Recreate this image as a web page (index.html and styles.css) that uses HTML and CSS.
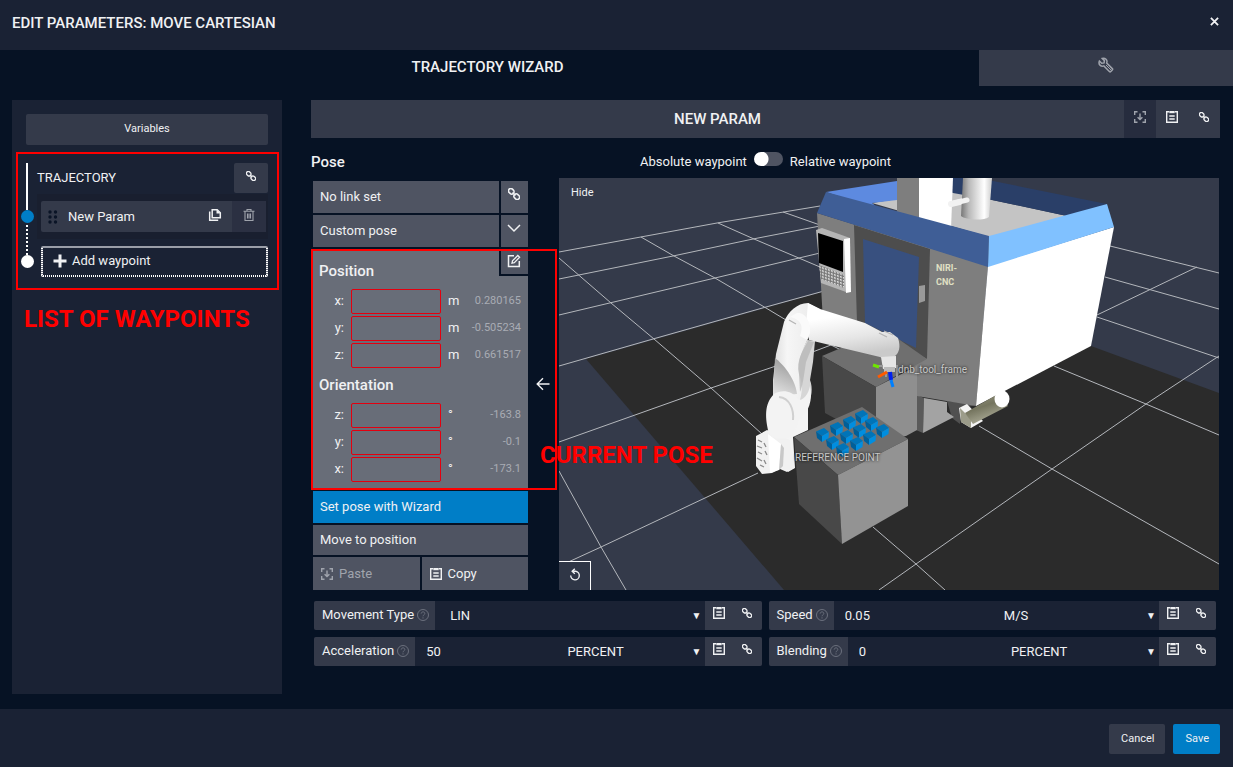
FILE: index.html
```html
<!DOCTYPE html>
<html lang="en">
<head>
    <meta charset="utf-8">
    <title>Edit parameters: Move Cartesian</title>
    <link rel="stylesheet" href="styles.css">
</head>
<body>

<!-- icon set -->
<svg class="sprite" aria-hidden="true">
    <symbol id="i-link" viewBox="0 0 14 14">
        <g transform="rotate(45 7 7)" fill="none" stroke="currentColor" stroke-width="1.8">
            <rect x="-1" y="4.300" width="7" height="5.400" rx="2.700"/>
            <rect x="8" y="4.300" width="7" height="5.400" rx="2.700"/>
            <path d="M4.6 7h4.8"/>
        </g>
    </symbol>
    <symbol id="i-copy" viewBox="0 0 14 14">
        <path d="M4 1.7H1.7v10.6h10.6V1.7H10" fill="none" stroke="currentColor" stroke-width="1.4"/>
        <path d="M4.3 1h5.4v2.2H4.3z" fill="currentColor"/>
        <path d="M4.3 6h5.4M4.3 9h5.4" stroke="currentColor" stroke-width="1.4"/>
    </symbol>
    <symbol id="i-paste" viewBox="0 0 14 14">
        <path d="M4.5 1.7H1.7v3.2M9.5 1.7h2.8v3.2M4.5 12.3H1.7V9.1M9.5 12.3h2.8V9.1M7 3.5v6M4.6 7.2L7 9.6l2.4-2.4" fill="none" stroke="currentColor" stroke-width="1.4"/>
    </symbol>
    <symbol id="i-wrench" viewBox="0 0 16 16">
        <path d="M4.2 1.4l2.2 2.2-.3 2.3-2.4.4L1.4 4C.7 5.8 1.1 7.4 2.2 8.3c1.1.9 2.4 1 3.6.6l5.6 5.6c.4.4 1 .4 1.4 0l1.5-1.5c.4-.4.4-1 0-1.4L8.7 6c.5-1.3.3-2.7-.7-3.7-1-1-2.4-1.4-3.8-.9z" fill="none" stroke="currentColor" stroke-width="1.5"/>
        <path d="M8 8l5 5" stroke="currentColor"/>
    </symbol>
    <symbol id="i-pages" viewBox="0 0 14 14">
        <path d="M4.2 1.7h5l3.1 3.1v5H4.2z" fill="none" stroke="currentColor" stroke-width="1.5"/>
        <path d="M8.5 1.5v4h4z" fill="currentColor"/>
        <path d="M1.7 3.5v8.800h8.5" fill="none" stroke="currentColor" stroke-width="1.5"/>
    </symbol>
    <symbol id="i-trash" viewBox="0 0 14 14">
        <path d="M1.5 3.2h11M5 3V1.5h4V3M3 3.5v9h8v-9M5.5 5.5v5M7 5.5v5M8.5 5.5v5" fill="none" stroke="currentColor" stroke-width="1.1"/>
    </symbol>
    <symbol id="i-plus" viewBox="0 0 14 14">
        <path d="M7 0.5v13M0.500 7h13" stroke="currentColor" stroke-width="3"/>
    </symbol>
    <symbol id="i-drag" viewBox="0 0 10 14">
        <g fill="currentColor">
            <circle cx="2" cy="2" r="1.7"/><circle cx="7.5" cy="2" r="1.7"/>
            <circle cx="2" cy="7" r="1.7"/><circle cx="7.5" cy="7" r="1.7"/>
            <circle cx="2" cy="12" r="1.7"/><circle cx="7.5" cy="12" r="1.7"/>
        </g>
    </symbol>
    <symbol id="i-chevron" viewBox="0 0 14 14">
        <path d="M1 4l6 6 6-6" fill="none" stroke="currentColor" stroke-width="1.5"/>
    </symbol>
    <symbol id="i-edit" viewBox="0 0 14 14">
        <path d="M7 1.7H1.5v10.8h10.8V7" fill="none" stroke="currentColor" stroke-width="1.5"/>
        <path d="M5 9.2l.5-2.4 5.3-5.3 1.8 1.8-5.3 5.3z" fill="none" stroke="currentColor" stroke-width="1.3"/>
    </symbol>
    <symbol id="i-arrow" viewBox="0 0 14 14">
        <path d="M13.5 7H1.5M7 1.2L1.2 7 7 12.8" fill="none" stroke="currentColor" stroke-width="1.4"/>
    </symbol>
    <symbol id="i-reset" viewBox="0 0 14 14">
        <path d="M5.5 3.3h2.2a4.3 4.3 0 1 1-5 4.3M6.8.8L4.2 3.3l2.6 2.5" fill="none" stroke="currentColor" stroke-width="1.4"/>
    </symbol>
    <symbol id="i-help" viewBox="0 0 14 14">
        <circle cx="7" cy="7" r="5.5" fill="none" stroke="currentColor"/>
        <path d="M5.2 5.6c0-2.3 3.6-2.3 3.6-.1C8.800 6.800 7 6.800 7 8.300M7 9.300v1.200" fill="none" stroke="currentColor"/>
    </symbol>
</svg>

<div class="dialog">
    <header class="dialog-header">
        <h1>EDIT PARAMETERS: MOVE CARTESIAN</h1>
        <button class="close" aria-label="Close"><svg viewBox="0 0 10 10"><path d="M1 1l8 8M9 1L1 9" stroke="currentColor" stroke-width="2"/></svg></button>
    </header>

    <nav class="tabs">
        <button class="tab tab-active">TRAJECTORY WIZARD</button>
        <button class="tab tab-tools" aria-label="Settings"><svg class="icon icon-16"><use href="#i-wrench"/></svg></button>
    </nav>

    <div class="content">
        <aside class="sidebar">
            <button class="variables">Variables</button>

            <section class="trajectory">
                <div class="rail">
                    <span class="rail-line"></span>
                    <span class="rail-dot rail-dot-active"></span>
                    <span class="rail-line rail-line-dotted"></span>
                    <span class="rail-dot"></span>
                </div>
                <div class="waypoints">
                    <div class="trajectory-head">
                        <h2>TRAJECTORY</h2>
                        <button class="trajectory-link" aria-label="Link trajectory"><svg class="icon icon-10"><use href="#i-link"/></svg></button>
                    </div>
                    <div class="waypoint-slot">
                        <div class="waypoint">
                            <svg class="drag"><use href="#i-drag"/></svg>
                            <span class="waypoint-name">New Param</span>
                            <button class="waypoint-btn" aria-label="Duplicate"><svg class="icon icon-14"><use href="#i-pages"/></svg></button>
                            <button class="waypoint-btn waypoint-delete" aria-label="Delete"><svg class="icon icon-14"><use href="#i-trash"/></svg></button>
                        </div>
                    </div>
                    <button class="add-waypoint"><svg class="icon icon-14"><use href="#i-plus"/></svg>Add waypoint</button>
                </div>
                <div class="callout callout-list"></div>
                <strong class="callout-text callout-text-list">LIST OF WAYPOINTS</strong>
            </section>
        </aside>

        <main class="editor">
            <div class="param-title">
                <h2>NEW PARAM</h2>
                <button class="title-btn title-btn-off" aria-label="Paste parameter"><svg class="icon icon-14"><use href="#i-paste"/></svg></button>
                <button class="title-btn" aria-label="Copy parameter"><svg class="icon icon-14"><use href="#i-copy"/></svg></button>
                <button class="title-btn" aria-label="Link parameter"><svg class="icon icon-10"><use href="#i-link"/></svg></button>
            </div>

            <div class="pose-head">
                <h3>Pose</h3>
                <label class="waypoint-mode">
                    <span>Absolute waypoint</span>
                    <input type="checkbox" class="switch">
                    <span>Relative waypoint</span>
                </label>
            </div>

            <div class="workspace">
                <div class="pose">
                    <div class="pose-row">
                        <button class="pose-item">No link set</button>
                        <button class="pose-side" aria-label="Link pose"><svg class="icon icon-12"><use href="#i-link"/></svg></button>
                    </div>
                    <div class="pose-row">
                        <button class="pose-item">Custom pose</button>
                        <button class="pose-side" aria-label="Choose pose"><svg class="icon icon-14"><use href="#i-chevron"/></svg></button>
                    </div>

                    <div class="pose-panel">
                        <button class="pose-edit" aria-label="Edit pose"><svg class="icon icon-14"><use href="#i-edit"/></svg></button>
                        <h4>Position</h4>
                        <div class="coord"><label for="pos-x">x:</label><input id="pos-x" type="text"><span class="unit">m</span><output>0.280165</output></div>
                        <div class="coord"><label for="pos-y">y:</label><input id="pos-y" type="text"><span class="unit">m</span><output>-0.505234</output></div>
                        <div class="coord"><label for="pos-z">z:</label><input id="pos-z" type="text"><span class="unit">m</span><output>0.661517</output></div>
                        <h4>Orientation</h4>
                        <div class="coord"><label for="rot-z">z:</label><input id="rot-z" type="text"><span class="unit">°</span><output>-163.8</output></div>
                        <div class="coord"><label for="rot-y">y:</label><input id="rot-y" type="text"><span class="unit">°</span><output>-0.1</output></div>
                        <div class="coord"><label for="rot-x">x:</label><input id="rot-x" type="text"><span class="unit">°</span><output>-173.1</output></div>
                    </div>

                    <button class="pose-item pose-wizard">Set pose with Wizard</button>
                    <button class="pose-item pose-move">Move to position</button>
                    <div class="pose-row">
                        <button class="pose-item pose-clip pose-paste" disabled><svg class="icon icon-14"><use href="#i-paste"/></svg>Paste</button>
                        <button class="pose-item pose-clip"><svg class="icon icon-14"><use href="#i-copy"/></svg>Copy</button>
                    </div>
                </div>

                <button class="take-pose" aria-label="Use current pose"><svg class="icon icon-14"><use href="#i-arrow"/></svg></button>

                <div class="scene">
                    <svg class="scene-view" viewBox="559 178 660 412">
                        <defs>
                            <linearGradient id="tube"><stop offset="0" stop-color="#777"/><stop offset=".25" stop-color="#b8b8b8"/><stop offset=".75" stop-color="#fff"/><stop offset="1" stop-color="#ccc"/></linearGradient>
                            <linearGradient id="arm"><stop offset="0" stop-color="#dcdcdc"/><stop offset=".3" stop-color="#f6f6f6"/><stop offset=".8" stop-color="#ececec"/><stop offset="1" stop-color="#cfcfcf"/></linearGradient>
                            <linearGradient id="forearm" x2=".25" y2="1"><stop offset=".3" stop-color="#fff"/><stop offset=".7" stop-color="#e6e6e6"/><stop offset="1" stop-color="#cacaca"/></linearGradient>
                            <linearGradient id="crease" x1=".3" x2="0" y2="1"><stop offset="0" stop-color="#9c9c9c"/><stop offset="1" stop-color="#e8e8e8"/></linearGradient>
                            <linearGradient id="chute" x2=".5" y2="1"><stop offset="0" stop-color="#9b9b86"/><stop offset=".5" stop-color="#75755f"/><stop offset="1" stop-color="#b0b09c"/></linearGradient>
                            <pattern id="keys" width="3" height="3" patternUnits="userSpaceOnUse" patternTransform="skewY(18)"><rect width="3" height="3" fill="#777"/><rect width="2" height="1.5" fill="#e4e4e4"/></pattern>
                            <symbol id="cube" viewBox="0 0 13 14">
                                <path d="M0 3.5L8 0l5 4-7 4z" fill="#0074b8"/>
                                <path d="M0 3.5L6 8v6L1 10z" fill="#005f99"/>
                                <path d="M6 8l7-4-.5 6L6 14z" fill="#008ee0"/>
                            </symbol>
                        </defs>

                        <rect x="559" y="178" width="660" height="412" fill="#343a4a"/>
                        <path d="M586 359L822 292 1091 346 1219 393V590H784z" fill="#2b2b2b"/>

                        <g class="grid">
                            <path d="M559 252L717 223 820 206M559 279L673 256 753 239 820 226M559 315L715 278 820 253M559 366L653 339 766 307 824 291"/>
                            <path d="M559 442L711 388 773 367 831 345 841 350M564 564L601 547 758 473"/>
                            <path d="M559 258L611 303 654 339 711 388 762 434M641 237L674 256 715 278 766 308 786 320M718 223L754 239 820 267M783 212L820 225M559 471L601 547 626 590"/>
                            <path d="M879 590L916 564 1052 469 1146 404 1219 356M1097 315L1197 267M1110 246L1219 273M1105 277L1219 309M1097 317L1219 358"/>
                            <path d="M1054 366L1146 404 1219 435M979 426L1052 469 1219 564M873 527L916 564 945 590"/>
                        </g>

                        <!-- machine -->
                        <path d="M947 401L978 405 960 408V424L952 418z" fill="#505050"/>
                        <path d="M917 395L924 398 923 433 916 430z" fill="#5a5a5a"/>
                        <path d="M924 398L947 402V412L954 417 923 433z" fill="#a3a3a3"/>
                        <path d="M817 213L988 266 976 406 917 396V370L823 322z" fill="#7e7e7e"/>
                        <path d="M854 225L930 249 927 359 857 322z" fill="#4d4d4d"/>
                        <path d="M863 239L919 257 916 348 865 323z" fill="#38507f"/>
                        <path d="M919 286L925 285V301L919 303z" fill="#9a9a9a"/>
                        <path d="M988 266L1114 227 1091 346 976 406z" fill="#fff"/>
                        <path d="M872 203L897 199 953 192 992 200 1067 216 989 237z" fill="#c4c4c4"/>
                        <path d="M926 178H978L1107 204 1067 216 992 200 953 193z" fill="#2a3f68"/>
                        <path d="M826 192L897 181V200L872 203 880 210z" fill="#5d8ae0"/>
                        <path d="M897 178H919V220L897 214z" fill="#7e7e7e"/>
                        <path d="M919 178H953L951 229 919 220z" fill="#fff"/>
                        <path d="M951 204L968 200" stroke="#f2f2f2" stroke-width="6" stroke-linecap="round"/>
                        <path d="M963 178H992L989 217C984 221 965 220 961 216z" fill="url(#tube)"/>
                        <path d="M951 204L967 200" stroke="#f2f2f2" stroke-width="5" stroke-linecap="round"/>
                        <path d="M826 192L989 236 988 267 817 213z" fill="#3f5e96"/>
                        <path d="M989 236L1107 204 1114 227 988 267z" fill="#80c1ff"/>
                        <path d="M816 230L822 228 850 238 846 292 821 283z" fill="#b5b5b5"/>
                        <path d="M844 239L850 238 851 292 846 293z" fill="#fff"/>
                        <path d="M818 233L843 241V272L819 263z"/>
                        <path d="M819 265L844 275V288L821 279z" fill="url(#keys)"/>
                        <text class="machine-name" x="936" y="271">NIRI-</text>
                        <text class="machine-name" x="936" y="285">CNC</text>

                        <!-- stand in front of the machine door -->
                        <path d="M822 356L848 345 897 338 927 359 876 387z" fill="#6f6f6f"/>
                        <path d="M822 356L876 387V441L825 413z" fill="#484848"/>
                        <path d="M876 387L917 366V430L906 436 876 441z" fill="#8f8f8f"/>

                        <path d="M959 408L967 404 983 421 971 428 961 422z" fill="#f4f4f4"/>
                        <path d="M960 408L971 419V428L961 422z" fill="#9c9c8a"/>
                        <path d="M965 413L998 394 1008 406 973 424z" fill="url(#chute)"/>
                        <ellipse cx="1002" cy="399" rx="7.5" ry="8.5" fill="#fff"/>

                        <!-- table -->
                        <path d="M794 437L862 407 908 439 838 475z" fill="#6f6f6f"/>
                        <path d="M794 437L838 475 842 544 799 504z" fill="#484848"/>
                        <path d="M838 475L908 439V506L842 544z" fill="#939393"/>
                        <g>
                            <use href="#cube" x="855" y="410" width="13" height="14"/>
                            <use href="#cube" x="843" y="416" width="13" height="14"/>
                            <use href="#cube" x="830" y="422" width="13" height="14"/>
                            <use href="#cube" x="816" y="428" width="13" height="14"/>
                            <use href="#cube" x="865" y="417" width="13" height="14"/>
                            <use href="#cube" x="853" y="424" width="13" height="14"/>
                            <use href="#cube" x="840" y="430" width="13" height="14"/>
                            <use href="#cube" x="826" y="436" width="13" height="14"/>
                            <use href="#cube" x="876" y="424" width="13" height="14"/>
                            <use href="#cube" x="863" y="431" width="13" height="14"/>
                            <use href="#cube" x="850" y="437" width="13" height="14"/>
                            <use href="#cube" x="836" y="443" width="13" height="14"/>
                        </g>

                        <!-- robot -->
                        <path d="M797 400L808 395V430L793 437 795 468 788 472 782 440z" fill="#f4f4f4"/>
                        <path d="M756 436L767 430 790 440 794 468 787 472 780 469 772 473 762 474 756 466z" fill="#f1f1f1"/>
                        <path d="M768 434L781 444 779 470 770 473z" fill="#fff"/>
                        <path d="M781 444L784 448 783 466 779 470z" fill="#c8c8c8"/>
                        <path d="M758 440l4 2M757 446l5 2M758 452l4 2M757 458l5 3M760 465l4 2M764 443l2 4M765 451l2 4M764 460l2 4" stroke="#8a8a8a" stroke-width="1.3"/>
                        <path d="M807 340L815 341 813 362 810 380C813 388 812 398 807 406L798 414 790 396 797 360z" fill="#d6d6d6"/>
                        <path d="M808 303C797 303 788 312 784 322L776 354 773 380V398L796 410C802 398 804 386 799 374C796 360 805 346 810 334L820 309z" fill="url(#arm)"/>
                        <path d="M775 358C783 364 795 378 797 394L773 396z" fill="url(#crease)"/>
                        <path d="M799 374C796 360 803 350 808 341L814 342 806 362C804 375 803 385 800 392z" fill="#b4b4b4" opacity=".7"/>
                        <path d="M774 394C782 389 792 391 797 398C801 403 808 396 810 386C813 400 809 412 799 420L792 437C782 440 773 439 769 434C765 418 764 404 774 394z" fill="#f3f3f3"/>
                        <path d="M779 397C790 398 794 410 793 420" fill="none" stroke="#d0d0d0" stroke-width="2"/>
                        <path d="M808 303L820 309 865 323 882 332 890 332 898 338C901 347 899 353 895 356C890 360 884 359 880 357L809 340 806 325z" fill="url(#forearm)"/>
                        <path d="M797 313C806 312 811 323 810 333L807 340 800 336C803 328 803 320 790 317z" fill="#fafafa"/>
                        <path d="M789 320l7 4M879 333l8 4M884 331l9 4" stroke="#b5b5b5" stroke-width="1.3"/>
                        <path d="M881 357L896 356V368L883 369z" fill="#e6e6e6"/>
                        <path d="M884 367H895V372H884z" fill="#bbb"/>
                        <path d="M878 366h5M886 372v5M897 365v13" stroke="#999" stroke-width="2"/>
                        <path d="M873 365l6 2" stroke="#6ee600" stroke-width="3"/>
                        <path d="M878 377l9-5" stroke="#ff5a00" stroke-width="3"/>
                        <path d="M890 372l1 8" stroke="#0020f0" stroke-width="4"/>
                        <path d="M891 380l2 7" stroke="#0080ff" stroke-width="3"/>

                        <text class="tag" x="898" y="373">dnb_tool_frame</text>
                        <text class="tag" x="795" y="461">REFERENCE POINT</text>
                    </svg>
                    <button class="scene-hide">Hide</button>
                    <button class="scene-reset" aria-label="Reset view"><svg class="icon icon-14"><use href="#i-reset"/></svg></button>
                </div>

                <div class="callout callout-pose"></div>
                <strong class="callout-text callout-text-pose">CURRENT POSE</strong>
            </div>

            <div class="settings">
                <div class="setting">
                    <label for="move-type">Movement Type<svg class="icon icon-14 help"><use href="#i-help"/></svg></label>
                    <div class="pick pick-wide"><select id="move-type"><option>LIN</option></select><span>▼</span></div>
                    <button class="setting-btn" aria-label="Copy movement type"><svg class="icon icon-14"><use href="#i-copy"/></svg></button>
                    <button class="setting-btn" aria-label="Link movement type"><svg class="icon icon-10"><use href="#i-link"/></svg></button>
                </div>
                <div class="setting">
                    <label for="speed">Speed<svg class="icon icon-14 help"><use href="#i-help"/></svg></label>
                    <input id="speed" type="text" value="0.05">
                    <div class="pick"><select aria-label="Speed unit"><option>M/S</option></select><span>▼</span></div>
                    <button class="setting-btn" aria-label="Copy speed"><svg class="icon icon-14"><use href="#i-copy"/></svg></button>
                    <button class="setting-btn" aria-label="Link speed"><svg class="icon icon-10"><use href="#i-link"/></svg></button>
                </div>
                <div class="setting">
                    <label for="acceleration">Acceleration<svg class="icon icon-14 help"><use href="#i-help"/></svg></label>
                    <input id="acceleration" type="text" value="50">
                    <div class="pick"><select aria-label="Acceleration unit"><option>PERCENT</option></select><span>▼</span></div>
                    <button class="setting-btn" aria-label="Copy acceleration"><svg class="icon icon-14"><use href="#i-copy"/></svg></button>
                    <button class="setting-btn" aria-label="Link acceleration"><svg class="icon icon-10"><use href="#i-link"/></svg></button>
                </div>
                <div class="setting">
                    <label for="blending">Blending<svg class="icon icon-14 help"><use href="#i-help"/></svg></label>
                    <input id="blending" type="text" value="0">
                    <div class="pick"><select aria-label="Blending unit"><option>PERCENT</option></select><span>▼</span></div>
                    <button class="setting-btn" aria-label="Copy blending"><svg class="icon icon-14"><use href="#i-copy"/></svg></button>
                    <button class="setting-btn" aria-label="Link blending"><svg class="icon icon-10"><use href="#i-link"/></svg></button>
                </div>
            </div>
        </main>
    </div>

    <footer class="dialog-footer">
        <button class="btn">Cancel</button>
        <button class="btn btn-primary">Save</button>
    </footer>
</div>

</body>
</html>
```
FILE: styles.css
```css
*
{
    box-sizing:border-box;
}
body
{
    margin:0;
    background-color:#061224;
    color:#f0f1f3;
    font-family:Roboto, "Liberation Sans", sans-serif;
    font-size:13px;
    line-height:20px;
}
h1, h2, h3, h4
{
    margin:0;
    font-size:15px;
    font-weight:500;
}
button, input, select
{
    margin:0;
    padding:0;
    border:0;
    border-radius:0;
    background:none;
    color:inherit;
    font:inherit;
}
button
{
    display:flex;
    align-items:center;
    justify-content:center;
}
.sprite
{
    display:none;
}
.icon
{
    flex:none;
    display:block;
}
.icon-10
{
    width:10px;
    height:10px;
}
.icon-12
{
    width:12px;
    height:12px;
}
.icon-14
{
    width:14px;
    height:14px;
}
.icon-16
{
    width:16px;
    height:16px;
}

/* dialog frame */
.dialog
{
    display:flex;
    flex-direction:column;
    min-height:100vh;
}
.dialog-header
{
    display:flex;
    align-items:center;
    justify-content:space-between;
    height:50px;
    padding:0 12px 4px;
    background-color:#1a2234;
}
.close
{
    width:14px;
    height:20px;
    padding-bottom:4px;
}
.close svg
{
    width:9px;
    height:9px;
}
.tabs
{
    display:flex;
    height:36px;
}
.tab
{
    font-size:15px;
    font-weight:500;
    padding-bottom:2px;
}
.tab-active
{
    flex:1;
    padding-right:4px;
}
.tab-tools
{
    width:254px;
    padding-bottom:6px;
    background-color:#343a4a;
    color:#9fa3ac;
}
.content
{
    flex:1;
    display:flex;
    gap:29px;
    padding:14px 13px 15px 12px;
}
.dialog-footer
{
    display:flex;
    justify-content:flex-end;
    gap:8px;
    padding:15px 13px 13px;
    background-color:#1a2234;
}
.btn
{
    height:30px;
    padding:0 11px 1px 12px;
    border-radius:2px;
    background-color:#343a4a;
    font-size:11px;
}
.btn-primary
{
    background-color:#007ec7;
}

/* waypoint list */
.sidebar
{
    width:270px;
    flex:none;
    padding:14px;
    background-color:#1a2234;
}
.variables
{
    width:100%;
    height:31px;
    padding-bottom:2px;
    border-radius:2px;
    background-color:#343a4a;
    font-size:11px;
}
.trajectory
{
    position:relative;
    display:flex;
    margin-top:18px;
}
.rail
{
    flex:none;
    width:13px;
    margin-left:-5px;
}
.rail-line
{
    display:block;
    height:47px;
    margin-left:5px;
    border-left:2px solid #fff;
}
.rail-line-dotted
{
    height:32px;
    border:0;
    width:2px;
    background:repeating-linear-gradient(transparent 0 2px, #fff 2px 4px);
}
.rail-dot
{
    display:block;
    width:13px;
    height:13px;
    border-radius:50%;
    background-color:#fff;
}
.rail-dot-active
{
    background-color:#007ec7;
}
.waypoints
{
    flex:1;
    padding-left:3px;
}
.trajectory-head
{
    display:flex;
    justify-content:space-between;
}
.trajectory-head h2
{
    padding-top:5px;
    font-size:13px;
    font-weight:400;
}
.trajectory-link
{
    width:34px;
    height:30px;
    padding-bottom:4px;
    border-radius:2px;
    background-color:#343a4a;
}
.waypoint-slot
{
    margin-top:1px;
    padding:7px 2px 7px 4px;
    background-color:#191f2f;
}
.waypoint
{
    display:flex;
    align-items:center;
    height:31px;
    padding-left:7px;
    border-radius:2px;
    background-color:#343a4a;
}
.drag
{
    width:10px;
    height:14px;
    margin-right:10px;
    color:#0a1426;
}
.waypoint-name
{
    flex:1;
}
.waypoint-btn
{
    width:34px;
    height:31px;
    padding-bottom:4px;
}
.waypoint-delete
{
    background-color:#2b3042;
    color:#9fa3ac;
}
.add-waypoint
{
    width:calc(100% - 4px);
    height:31px;
    margin:7px 0 0 4px;
    padding:0 12px 2px;
    justify-content:flex-start;
    gap:5px;
    border-radius:2px;
    background:
        linear-gradient(#9a9ea8, #9a9ea8) top / 100% 2px no-repeat,
        repeating-linear-gradient(90deg, #fff 0 1px, transparent 1px 2px) bottom / 100% 2px no-repeat,
        repeating-linear-gradient(#fff 0 1px, #6d7280 1px 2px) left / 2px 100% no-repeat,
        repeating-linear-gradient(#fff 0 1px, #6d7280 1px 2px) right / 2px 100% no-repeat;
}

/* red callouts over the page */
.callout
{
    position:absolute;
    border:2px solid #f00;
    pointer-events:none;
}
.callout-list
{
    top:-11px;
    right:-11px;
    bottom:-13px;
    left:-10px;
}
.callout-text
{
    position:absolute;
    color:#f00;
    font-size:24px;
    font-weight:700;
    line-height:28px;
    white-space:nowrap;
    pointer-events:none;
}
.callout-text-list
{
    top:142px;
    left:-2px;
}
.callout-pose
{
    top:71px;
    left:0;
    width:246px;
    height:241px;
}
.callout-text-pose
{
    top:263px;
    left:229px;
}

/* editor */
.editor
{
    flex:1;
    min-width:0;
}
.param-title
{
    display:flex;
    height:38px;
    background-color:#343a4a;
}
.param-title h2
{
    flex:1;
    line-height:38px;
    text-align:center;
}
.title-btn
{
    width:32px;
    padding-bottom:4px;
}
.title-btn-off
{
    background-color:#262c3e;
    color:#9fa3ac;
}
.pose-head
{
    display:grid;
    grid-template-columns:1fr auto 1fr;
    align-items:center;
    padding:14px 0 6px;
}
.waypoint-mode
{
    display:flex;
    align-items:center;
    gap:7px;
}
.switch
{
    appearance:none;
    width:29px;
    height:14px;
    margin-top:-6px;
    border-radius:7px;
    background:radial-gradient(circle at 7px 7px, #fff 7px, #4f5462 8px);
}
.workspace
{
    position:relative;
    display:flex;
    padding-right:1px;
}
.pose
{
    flex:none;
    display:flex;
    flex-direction:column;
    gap:2px;
    width:217px;
    padding:3px 0 0 2px;
}
.pose-row
{
    display:flex;
    gap:2px;
}
.pose-item
{
    flex:1 0 auto;
    height:32px;
    padding:0 7px;
    justify-content:flex-start;
    background-color:#4f5462;
}
.pose-side
{
    width:27px;
    padding:0 1px 6px 0;
    background-color:#4f5462;
}
.pose-panel
{
    position:relative;
    margin-bottom:1px;
    padding:12px 7px 6px 6px;
    background-color:#686d78;
}
.pose-panel h4
{
    margin-bottom:8px;
}
.coord
{
    display:flex;
    align-items:center;
    height:25px;
    margin-bottom:2px;
}
.coord + h4
{
    margin-top:7px;
}
.coord label
{
    width:25px;
    padding-bottom:2px;
    text-align:right;
}
.coord input
{
    width:90px;
    height:25px;
    margin:0 7px;
    border:1px solid #e3000f;
    border-radius:2px;
}
.coord:last-child
{
    margin-bottom:0;
}
.unit
{
    padding-bottom:2px;
}
.coord output
{
    margin-left:auto;
    padding-bottom:2px;
    color:#a8acb4;
    font-size:11px;
}
.pose-edit
{
    position:absolute;
    top:0;
    right:0;
    width:29px;
    height:27px;
    padding:0 1px 1px 0;
    border:solid #061224;
    border-width:0 0 2px 2px;
    background-color:#4f5462;
}
.pose-wizard
{
    background-color:#007ec7;
}
.pose-move
{
    height:30px;
}
.pose-clip
{
    flex:1;
    height:33px;
    gap:5px;
}
.pose-paste
{
    color:#a0a4ad;
}
.take-pose
{
    width:31px;
    padding:0 1px 1px 0;
}
.scene
{
    position:relative;
    flex:1;
    min-width:0;
}
.scene-view
{
    display:block;
    width:100%;
}
.grid
{
    fill:none;
    stroke:#b4b7bc;
    stroke-width:1px;
}
.machine-name
{
    fill:#e0e0c4;
    font-size:9px;
    font-weight:700;
}
.tag
{
    fill:#c8c8c8;
    font-size:10px;
    text-shadow:0 0 3px #000;
}
.scene-hide
{
    position:absolute;
    top:5px;
    left:12px;
    font-size:11px;
}
.scene-reset
{
    position:absolute;
    bottom:0;
    left:0;
    width:32px;
    height:29px;
    padding-bottom:2px;
    border:solid #fff;
    border-width:1px 1px 0 0;
    background-color:#2f3646;
}

/* motion settings */
.settings
{
    display:grid;
    grid-template-columns:1fr 1fr;
    gap:7px;
    padding:11px 4px 0 3px;
}
.setting
{
    display:flex;
    height:29px;
    border-radius:2px;
    overflow:hidden;
    background-color:#1a2234;
}
.setting label
{
    display:flex;
    align-items:center;
    padding:0 5px 2px 8px;
    gap:2px;
    background-color:#343a4a;
}
.help
{
    color:#6b707d;
}
.setting input
{
    flex:1;
    min-width:0;
    padding-left:11px;
}
.pick
{
    flex:1;
    display:grid;
    align-items:center;
}
.pick select, .pick span
{
    grid-area:1 / 1;
}
.pick select
{
    appearance:none;
    height:29px;
    padding-left:2px;
}
.pick-wide select
{
    padding-left:15px;
}
.pick span
{
    justify-self:end;
    padding-right:3px;
    font-size:10px;
    pointer-events:none;
}
.setting-btn
{
    width:28px;
    padding-bottom:5px;
    background-color:#343a4a;
}
.setting-btn:last-child
{
    width:29px;
    padding-right:1px;
}
```
